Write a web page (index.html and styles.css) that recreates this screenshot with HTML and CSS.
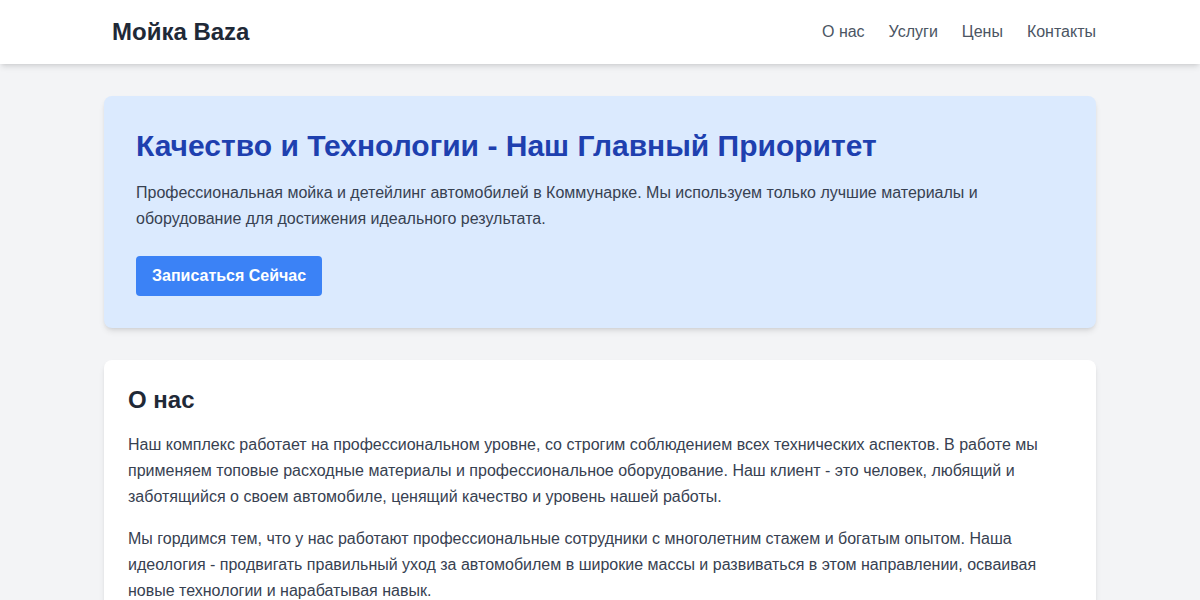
FILE: index.html
```html
<!DOCTYPE html>
<html lang="ru">
<head>
<meta charset="utf-8">
<title>Мойка Baza</title>
<link rel="stylesheet" href="styles.css">
</head>
<body>
<header class="site-header">
  <div class="header-inner">
    <a class="logo" href="#">Мойка Baza</a>
    <nav class="nav">
      <a href="#about">О нас</a>
      <a href="#services">Услуги</a>
      <a href="#prices">Цены</a>
      <a href="#contacts">Контакты</a>
    </nav>
  </div>
</header>
<main class="main">
  <section class="hero">
    <h1>Качество и Технологии - Наш Главный Приоритет</h1>
    <p>Профессиональная мойка и детейлинг автомобилей в Коммунарке. Мы используем только лучшие материалы и оборудование для достижения идеального результата.</p>
    <a class="btn" href="#contacts">Записаться Сейчас</a>
  </section>
  <section class="card" id="about">
    <h2>О нас</h2>
    <p>Наш комплекс работает на профессиональном уровне, со строгим соблюдением всех технических аспектов. В работе мы применяем топовые расходные материалы и профессиональное оборудование. Наш клиент - это человек, любящий и заботящийся о своем автомобиле, ценящий качество и уровень нашей работы.</p>
    <p>Мы гордимся тем, что у нас работают профессиональные сотрудники с многолетним стажем и богатым опытом. Наша идеология - продвигать правильный уход за автомобилем в широкие массы и развиваться в этом направлении, осваивая новые технологии и нарабатывая навык.</p>
  </section>
</main>
</body>
</html>
```

FILE: styles.css
```css
* { box-sizing: border-box; }
html, body { margin: 0; padding: 0; }
body {
  font-family: "Liberation Sans", Arial, sans-serif;
  background: #f3f4f6;
  color: #374151;
  font-size: 16px;
}
a { text-decoration: none; }
.site-header {
  background: #ffffff;
  box-shadow: 0 4px 6px -1px rgba(0,0,0,0.1), 0 2px 4px -2px rgba(0,0,0,0.1);
  position: relative;
  z-index: 1;
}
.header-inner {
  max-width: 1024px;
  margin: 0 auto;
  padding: 0 16px 0 24px;
  height: 64px;
  display: flex;
  align-items: center;
  justify-content: space-between;
}
.logo {
  font-size: 24px;
  font-weight: 700;
  color: #1f2937;
  line-height: 32px;
}
.nav {
  display: flex;
  gap: 24px;
}
.nav a {
  color: #4b5563;
  font-size: 16px;
  line-height: 24px;
}
.main {
  max-width: 1024px;
  margin: 0 auto;
  padding: 32px 16px;
}
.hero {
  background: #dbeafe;
  border-radius: 8px;
  padding: 32px;
  box-shadow: 0 4px 6px -1px rgba(0,0,0,0.1), 0 2px 4px -2px rgba(0,0,0,0.1);
  margin-bottom: 32px;
}
.hero h1 {
  margin: 0 0 16px;
  font-size: 30px;
  line-height: 36px;
  font-weight: 700;
  color: #1e40af;
}
.hero p {
  margin: 0 0 24px;
  font-size: 16px;
  line-height: 26px;
  color: #374151;
}
.btn {
  display: inline-block;
  background: #3b82f6;
  color: #ffffff;
  font-weight: 700;
  font-size: 16px;
  line-height: 24px;
  padding: 8px 16px;
  border-radius: 4px;
}
.card {
  background: #ffffff;
  border-radius: 8px;
  padding: 24px;
  box-shadow: 0 4px 6px -1px rgba(0,0,0,0.1), 0 2px 4px -2px rgba(0,0,0,0.1);
}
.card h2 {
  margin: 0 0 16px;
  font-size: 24px;
  line-height: 32px;
  font-weight: 700;
  color: #1f2937;
}
.card p {
  margin: 0 0 16px;
  font-size: 16px;
  line-height: 26px;
  color: #374151;
}
```
